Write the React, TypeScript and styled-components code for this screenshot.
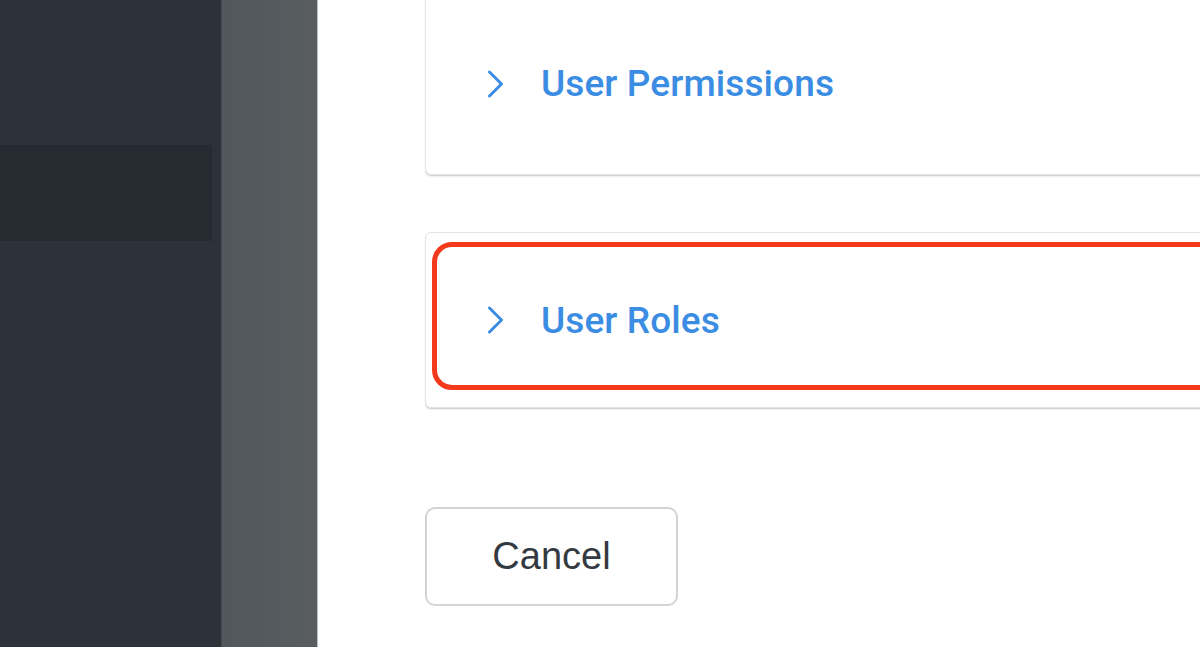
import React from 'react';
import styled, { createGlobalStyle } from 'styled-components';

const GlobalStyle = createGlobalStyle`
  html, body {
    margin: 0;
    padding: 0;
    overflow: hidden;
    background: #ffffff;
  }
`;

const Layout = styled.div`
  display: flex;
  width: 1200px;
  height: 647px;
  overflow: hidden;
`;

const Sidebar = styled.aside`
  width: 221px;
  flex-shrink: 0;
  background: #2c323a;
  display: flex;
  flex-direction: column;
`;

const ActiveItem = styled.div`
  margin-top: 145px;
  width: 212px;
  height: 96px;
  background: #262b32;
`;

const Backdrop = styled.div`
  box-sizing: border-box;
  width: 97px;
  flex-shrink: 0;
  background: linear-gradient(90deg, #50585c 0%, #545b5e 55%, #5a5d5f 100%);
  border-left: 1px solid #474e53;
  border-right: 1px solid #b9bdbf;
`;

const Main = styled.main`
  flex: 1;
  background: #ffffff;
  padding-left: 107px;
  display: flex;
  flex-direction: column;
  align-items: flex-start;
`;

const CardList = styled.div`
  display: flex;
  flex-direction: column;
  gap: 57px;
  width: calc(100% + 60px);
  margin-top: -8px;
`;

const Card = styled.div<{ $height: number }>`
  position: relative;
  box-sizing: border-box;
  height: ${(p) => p.$height}px;
  border: 1px solid #e3e4e5;
  border-radius: 6px;
  background: #ffffff;
  box-shadow: 0 2px 2px rgba(0, 0, 0, 0.07), 0 1px 0 #e2e3e4;
  display: flex;
  align-items: center;
  padding-left: 61px;
  gap: 37px;
`;

const Chevron = styled.svg`
  width: 17px;
  height: 28px;
  flex-shrink: 0;
`;

const Title = styled.span`
  font-family: Roboto, "Noto Sans", sans-serif;
  font-weight: 500;
  font-size: 37px;
  color: #3a8de2;
  letter-spacing: 0.1px;
`;

const Highlight = styled.div`
  position: absolute;
  left: 6px;
  top: 9px;
  right: -40px;
  bottom: 17px;
  border: 5px solid #f43a1d;
  border-radius: 20px;
  pointer-events: none;
`;

const CancelButton = styled.button`
  margin-top: 99px;
  width: 253px;
  height: 99px;
  box-sizing: border-box;
  border: 2px solid #d3d4d5;
  border-radius: 10px;
  background: #ffffff;
  font-family: "Liberation Sans", Arial, sans-serif;
  font-size: 38px;
  color: #343a41;
  cursor: pointer;
`;

const ChevronIcon = () => (
  <Chevron viewBox="0 0 17 28" fill="none">
    <polyline
      points="2.5,2 14.5,14 2.5,26"
      stroke="#3a8de2"
      strokeWidth="3"
      strokeLinecap="round"
      strokeLinejoin="round"
    />
  </Chevron>
);

const App: React.FC = () => {
  return (
    <>
      <GlobalStyle />
      <Layout>
        <Sidebar>
          <ActiveItem />
        </Sidebar>
        <Backdrop />
        <Main>
          <CardList>
            <Card $height={183}>
              <ChevronIcon />
              <Title>User Permissions</Title>
            </Card>
            <Card $height={176}>
              <ChevronIcon />
              <Title>User Roles</Title>
              <Highlight />
            </Card>
          </CardList>
          <CancelButton>Cancel</CancelButton>
        </Main>
      </Layout>
    </>
  );
};

export default App;
